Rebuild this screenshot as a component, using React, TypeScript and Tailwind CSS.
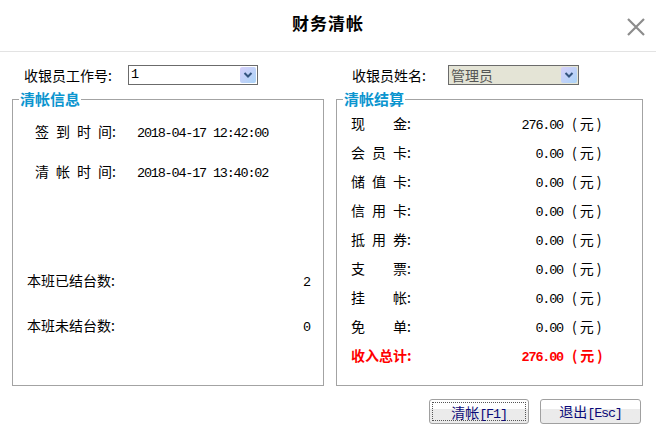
import React from "react";

const mono = "font-['Liberation_Mono',monospace] text-[13.5px] tracking-[-1.2px]";

// spaced label: each char in a 21px cell, last char 14px, then colon
const Spaced = ({ chars }: { chars: string[] }) => (
  <span className="flex">
    {chars.map((c, i) => (
      <span
        key={i}
        className={i === chars.length - 1 ? "w-[14px]" : "w-[21px]"}
      >
        {c}
      </span>
    ))}
    <span>:</span>
  </span>
);

const Yuan = () => (
  <span className="flex">
    <span className="ml-[9px]">(</span>
    <span className="ml-[3px]">元</span>
    <span className="ml-[3px]">)</span>
  </span>
);

const Arrow = () => (
  <div className="w-[16px] h-[16px] rounded-[2px] bg-gradient-to-br from-[#d6d0fa] to-[#a9d3f7] flex items-center justify-center">
    <svg width="10" height="8" viewBox="0 0 10 8">
      <path
        d="M1.5 2 L5 5.5 L8.5 2"
        stroke="#34557f"
        strokeWidth="2"
        fill="none"
      />
    </svg>
  </div>
);

const payRows = [
  { label: ["现", "", "金"], value: "276.00" },
  { label: ["会", "员", "卡"], value: "0.00" },
  { label: ["储", "值", "卡"], value: "0.00" },
  { label: ["信", "用", "卡"], value: "0.00" },
  { label: ["抵", "用", "券"], value: "0.00" },
  { label: ["支", "", "票"], value: "0.00" },
  { label: ["挂", "", "帐"], value: "0.00" },
  { label: ["免", "", "单"], value: "0.00" },
];

const App = () => {
  return (
    <div className="w-[656px] h-[443px] bg-white relative text-[14px] text-black font-['Noto_Sans_CJK_SC',sans-serif] overflow-hidden">
      {/* HEADER */}
      <div className="h-[52px] border-b border-[#e3e3e3] flex items-center justify-center pb-[6px]">
        <h1 className="text-[17px] font-bold tracking-[1px]">财务清帐</h1>
      </div>
      <button className="absolute right-[10px] top-[17px]">
        <svg width="20" height="20" viewBox="0 0 20 20">
          <path
            d="M2 2 L18 18 M18 2 L2 18"
            stroke="#8c8c8c"
            strokeWidth="2.2"
          />
        </svg>
      </button>

      {/* CASHIER ROW */}
      <div className="flex items-center h-[20px] mt-[13px]">
        <span className="ml-[24px] w-[104px] leading-[20px]">收银员工作号:</span>
        <div className="w-[130px] h-[20px] border border-[#6b6b6b] bg-white flex items-center justify-between pl-[2px] pr-[1px]">
          <span className={`${mono} leading-[18px]`}>1</span>
          <Arrow />
        </div>
        <span className="ml-[94px] w-[96px] leading-[20px]">收银员姓名:</span>
        <div className="w-[131px] h-[20px] border border-[#6b6b6b] bg-[#e4e4d6] flex items-center justify-between pl-[2px] pr-[1px]">
          <span className="text-[#555] leading-[18px]">管理员</span>
          <Arrow />
        </div>
      </div>

      {/* PANELS */}
      <div className="flex mt-[6px]">
        {/* LEFT */}
        <fieldset className="ml-[12px] w-[312px] h-[295px] border border-[#a3a3a3]">
          <legend className="ml-[6px] px-[1px] text-[15px] leading-[16px] font-bold text-[#0b95cf]">
            清帐信息
          </legend>
          <div className="flex items-baseline h-[20px] leading-[20px] mt-[14px] pl-[22px]">
            <span className="w-[102px]">
              <Spaced chars={["签", "到", "时", "间"]} />
            </span>
            <span className={mono}>2018-04-17 12:42:00</span>
          </div>
          <div className="flex items-baseline h-[20px] leading-[20px] mt-[20px] pl-[22px]">
            <span className="w-[102px]">
              <Spaced chars={["清", "帐", "时", "间"]} />
            </span>
            <span className={mono}>2018-04-17 13:40:02</span>
          </div>
          <div className="flex items-baseline justify-between h-[20px] leading-[20px] mt-[89px] pl-[14px] pr-[13px]">
            <span>本班已结台数:</span>
            <span className={mono}>2</span>
          </div>
          <div className="flex items-baseline justify-between h-[20px] leading-[20px] mt-[25px] pl-[14px] pr-[13px]">
            <span>本班未结台数:</span>
            <span className={mono}>0</span>
          </div>
        </fieldset>

        {/* RIGHT */}
        <fieldset className="ml-[12px] w-[307px] h-[295px] border border-[#a3a3a3]">
          <legend className="ml-[6px] px-[1px] text-[15px] leading-[16px] font-bold text-[#0b95cf]">
            清帐结算
          </legend>
          <div className="mt-[2px] pl-[14px]">
            {payRows.map((r, i) => (
              <div key={i} className="flex items-baseline h-[29px] leading-[29px]">
                <span className="w-[80px]">
                  <Spaced chars={r.label} />
                </span>
                <span className={`w-[132px] text-right ${mono}`}>{r.value}</span>
                <Yuan />
              </div>
            ))}
            <div className="flex items-baseline h-[29px] leading-[29px] text-[#ff0000] font-bold">
              <span className="w-[80px]">收入总计:</span>
              <span className={`w-[132px] text-right font-bold ${mono}`}>276.00</span>
              <Yuan />
            </div>
          </div>
        </fieldset>
      </div>

      {/* BUTTONS */}
      <div className="flex justify-end gap-[11px] pr-[15px] mt-[13px]">
        <button className="w-[100px] h-[25px] rounded-[3px] border border-[#a0a0a0] bg-gradient-to-b from-white from-40% to-[#ebebeb] to-40% p-[2px]">
          <div className="w-full h-full border border-dotted border-[#555] flex items-baseline justify-center leading-[19px] text-[#0a0a78]">
            清帐<span className={mono}>[F1]</span>
          </div>
        </button>
        <button className="w-[101px] h-[25px] rounded-[3px] border border-[#a0a0a0] bg-gradient-to-b from-white from-40% to-[#ebebeb] to-40% flex items-baseline justify-center leading-[23px] text-[#0a0a78]">
          退出<span className={mono}>[Esc]</span>
        </button>
      </div>
    </div>
  );
};

export default App;
